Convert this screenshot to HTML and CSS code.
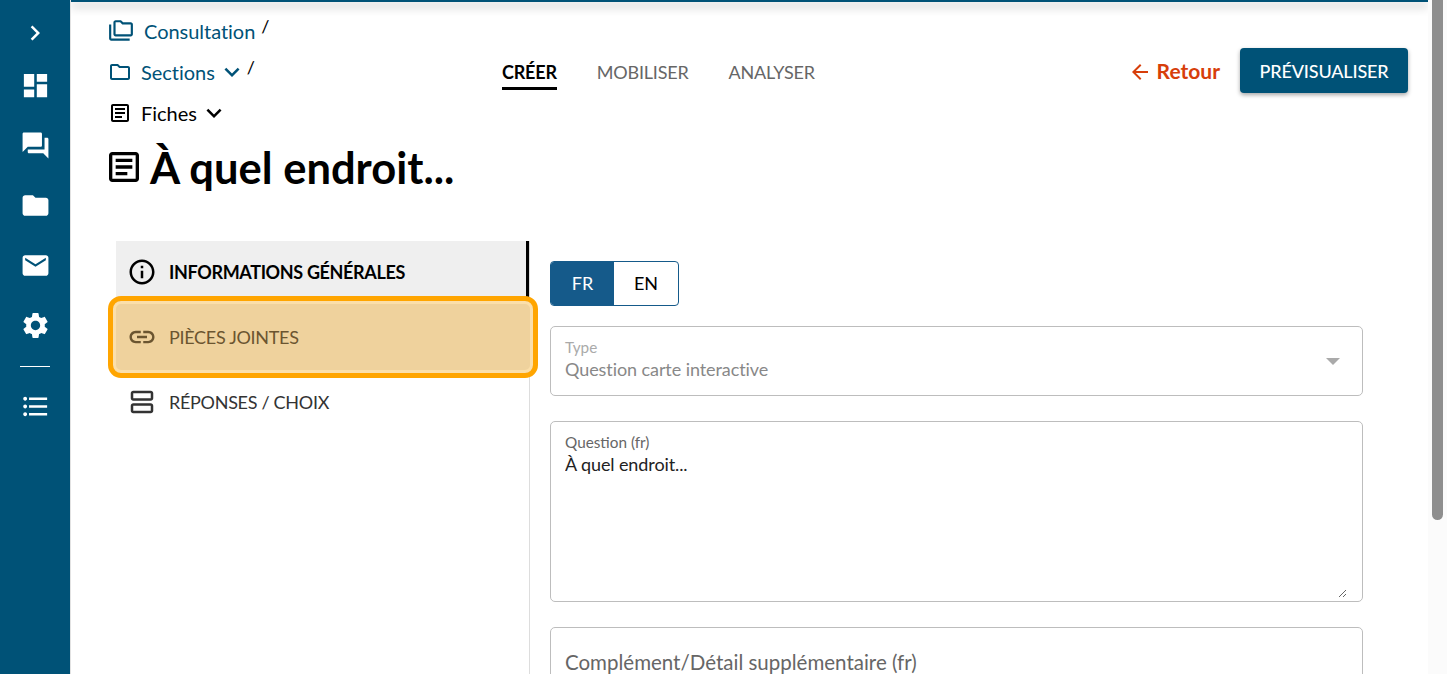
FILE: index.html
```html
<!DOCTYPE html>
<html lang="fr">
<head>
<meta charset="utf-8">
<title>À quel endroit...</title>
<link rel="stylesheet" href="styles.css">
</head>
<body>
<div class="app">
  <aside class="rail">
    <svg class="rail-icon rail-chevron" viewBox="0 0 24 24"><path d="M10 6L8.59 7.41 13.17 12l-4.58 4.59L10 18l6-6z"/></svg>
    <svg class="rail-icon" viewBox="0 0 24 24"><path d="M3 13h8V3H3v10zm0 8h8v-6H3v6zm10 0h8V11h-8v10zm0-18v6h8V3h-8z"/></svg>
    <svg class="rail-icon" viewBox="0 0 24 24"><path d="M21 6h-2v9H6v2c0 .55.45 1 1 1h11l4 4V7c0-.55-.45-1-1-1zm-4 6V3c0-.55-.45-1-1-1H3c-.55 0-1 .45-1 1v14l4-4h10c.55 0 1-.45 1-1z"/></svg>
    <svg class="rail-icon" viewBox="0 0 24 24"><path d="M10 4H4c-1.1 0-1.99.9-1.99 2L2 18c0 1.1.9 2 2 2h16c1.1 0 2-.9 2-2V8c0-1.1-.9-2-2-2h-8l-2-2z"/></svg>
    <svg class="rail-icon" viewBox="0 0 24 24"><path d="M20 4H4c-1.1 0-1.99.9-1.99 2L2 18c0 1.1.9 2 2 2h16c1.1 0 2-.9 2-2V6c0-1.1-.9-2-2-2zm0 4l-8 5-8-5V6l8 5 8-5v2z"/></svg>
    <svg class="rail-icon" viewBox="0 0 24 24"><path d="M19.14 12.94c.04-.3.06-.61.06-.94 0-.32-.02-.64-.07-.94l2.03-1.58c.18-.14.23-.41.12-.61l-1.92-3.32c-.12-.22-.37-.29-.59-.22l-2.39.96c-.5-.38-1.03-.7-1.62-.94l-.36-2.54c-.04-.24-.24-.41-.48-.41h-3.84c-.24 0-.43.17-.47.41l-.36 2.54c-.59.24-1.13.57-1.62.94l-2.39-.96c-.22-.08-.47 0-.59.22L2.74 8.87c-.12.21-.08.47.12.61l2.03 1.58c-.05.3-.09.63-.09.94s.02.64.07.94l-2.03 1.58c-.18.14-.23.41-.12.61l1.92 3.32c.12.22.37.29.59.22l2.39-.96c.5.38 1.03.7 1.62.94l.36 2.54c.05.24.24.41.48.41h3.84c.24 0 .44-.17.47-.41l.36-2.54c.59-.24 1.13-.56 1.62-.94l2.39.96c.22.08.47 0 .59-.22l1.92-3.32c.12-.22.07-.47-.12-.61l-2.01-1.58zM12 15.6c-1.98 0-3.6-1.62-3.6-3.6s1.62-3.6 3.6-3.6 3.6 1.62 3.6 3.6-1.62 3.6-3.6 3.6z"/></svg>
    <div class="rail-rule"></div>
    <svg class="rail-icon" viewBox="0 0 24 24"><path d="M4 10.5c-.83 0-1.5.67-1.5 1.5s.67 1.5 1.5 1.5 1.5-.67 1.5-1.5-.67-1.5-1.5-1.5zm0-6c-.83 0-1.5.67-1.5 1.5S3.17 7.5 4 7.5 5.5 6.83 5.5 6 4.83 4.5 4 4.5zm0 12c-.83 0-1.5.68-1.5 1.5s.68 1.5 1.5 1.5 1.5-.68 1.5-1.5-.67-1.5-1.5-1.5zM7 19h14v-2H7v2zm0-6h14v-2H7v2zm0-8v2h14V5H7z"/></svg>
  </aside>

  <main class="main">
    <div class="topline"></div>
    <header class="header">
      <nav class="crumbs">
        <div class="crumb crumb-first">
          <svg class="crumb-icon crumb-icon-lg" viewBox="0 0 24 24"><path d="M3 19h17v2H3c-1.1 0-2-.9-2-2V6h2v13zM23 6v9c0 1.1-.9 2-2 2H7c-1.1 0-2-.9-2-2V4c0-1.1.9-2 2-2h5l2 2h7c1.1 0 2 .9 2 2zM7 15h14V6h-7.83l-2-2H7v11z"/></svg>
          <a class="crumb-text">Consultation</a><span class="slash">/</span>
        </div>
        <div class="crumb crumb-second">
          <svg class="crumb-icon" viewBox="0 0 24 24"><path d="M9.17 6l2 2H20v10H4V6h5.17M10 4H4c-1.1 0-1.99.9-1.99 2L2 18c0 1.1.9 2 2 2h16c1.1 0 2-.9 2-2V8c0-1.1-.9-2-2-2h-8l-2-2z"/></svg>
          <a class="crumb-text">Sections</a>
          <svg class="crumb-caret" viewBox="0 0 24 24"><path d="M16.59 8.59L12 13.17 7.41 8.59 6 10l6 6 6-6z"/></svg><span class="slash">/</span>
        </div>
        <div class="crumb crumb-third">
          <svg class="crumb-icon" viewBox="0 0 24 24"><path d="M19 5v14H5V5h14m0-2H5c-1.1 0-2 .9-2 2v14c0 1.1.9 2 2 2h14c1.1 0 2-.9 2-2V5c0-1.1-.9-2-2-2z"/><path d="M14 17H7v-2h7v2zm3-4H7v-2h10v2zm0-4H7V7h10v2z"/></svg>
          <a class="crumb-text">Fiches</a>
          <svg class="crumb-caret" viewBox="0 0 24 24"><path d="M16.59 8.59L12 13.17 7.41 8.59 6 10l6 6 6-6z"/></svg>
        </div>
      </nav>
      <div class="tabs">
        <span class="tab tab-active">CRÉER</span>
        <span class="tab">MOBILISER</span>
        <span class="tab">ANALYSER</span>
      </div>
      <div class="actions">
        <a class="back">
          <svg class="back-icon" viewBox="0 0 24 24"><path d="M20 11H7.83l5.59-5.59L12 4l-8 8 8 8 1.41-1.41L7.83 13H20v-2z"/></svg>
          Retour
        </a>
        <button class="preview">PRÉVISUALISER</button>
      </div>
    </header>

    <h1 class="title">
      <svg class="title-icon" viewBox="0 0 24 24"><path d="M19 5v14H5V5h14m0-2H5c-1.1 0-2 .9-2 2v14c0 1.1.9 2 2 2h14c1.1 0 2-.9 2-2V5c0-1.1-.9-2-2-2z"/><path d="M14 17H7v-2h7v2zm3-4H7v-2h10v2zm0-4H7V7h10v2z"/></svg>
      À quel endroit...
    </h1>

    <div class="body">
      <nav class="side">
        <a class="side-item side-active">
          <svg class="side-icon" viewBox="0 0 24 24"><path d="M11 7h2v2h-2zm0 4h2v6h-2zm1-9C6.48 2 2 6.48 2 12s4.48 10 10 10 10-4.48 10-10S17.52 2 12 2zm0 18c-4.41 0-8-3.59-8-8s3.59-8 8-8 8 3.59 8 8-3.59 8-8 8z"/></svg>
          <span class="side-label">INFORMATIONS GÉNÉRALES</span>
        </a>
        <a class="side-item side-focus">
          <svg class="side-icon" viewBox="0 0 24 24"><path d="M3.9 12c0-1.71 1.39-3.1 3.1-3.1h4V7H7c-2.76 0-5 2.24-5 5s2.24 5 5 5h4v-1.9H7c-1.71 0-3.1-1.39-3.1-3.1zM8 13h8v-2H8v2zm9-6h-4v1.9h4c1.71 0 3.1 1.39 3.1 3.1s-1.39 3.1-3.1 3.1h-4V17h4c2.76 0 5-2.24 5-5s-2.24-5-5-5z"/></svg>
          <span class="side-label">PIÈCES JOINTES</span>
        </a>
        <a class="side-item">
          <svg class="side-icon" viewBox="0 0 24 24"><path d="M19 13H5c-1.1 0-2 .9-2 2v4c0 1.1.9 2 2 2h14c1.1 0 2-.9 2-2v-4c0-1.1-.9-2-2-2zm0 6H5v-4h14v4zm0-16H5c-1.1 0-2 .9-2 2v4c0 1.1.9 2 2 2h14c1.1 0 2-.9 2-2V5c0-1.1-.9-2-2-2zm0 6H5V5h14v4z"/></svg>
          <span class="side-label">RÉPONSES / CHOIX</span>
        </a>
      </nav>

      <section class="form">
        <div class="lang">
          <span class="lang-btn lang-on">FR</span>
          <span class="lang-btn">EN</span>
        </div>
        <div class="field field-select">
          <div class="select-text">
            <span class="field-label field-label-off">Type</span>
            <span class="select-value">Question carte interactive</span>
          </div>
          <span class="select-arrow"></span>
        </div>
        <div class="field field-area">
          <label class="field-label" for="q">Question (fr)</label>
          <textarea id="q" class="area">À quel endroit...</textarea>
        </div>
        <div class="field field-extra">
          <span class="extra-text">Complément/Détail supplémentaire (fr)</span>
        </div>
      </section>
    </div>
  </main>

  <div class="scrollbar"><div class="thumb"></div></div>
</div>
</body>
</html>
```

FILE: styles.css
```css
* { box-sizing: border-box; }
html, body { margin: 0; height: 100%; overflow: hidden; background: #fff; }
body { font-family: "Lato", "Liberation Sans", sans-serif; color: #000; }

.app { display: flex; height: 674px; }

.rail {
  flex: 0 0 71px;
  background: #005277;
  border-right: 1px solid #e2e2e2;
  display: flex;
  flex-direction: column;
  align-items: center;
  padding-top: 18px;
  gap: 29px;
}
.rail-icon { width: 31px; height: 31px; fill: #fff; flex: none; }
.rail-chevron { width: 30px; height: 30px; margin-bottom: -7px; }
.rail-rule { width: 30px; height: 1px; background: #fff; margin: -4px 0 -5px; flex: none; }

.main { flex: 1; min-width: 0; display: flex; flex-direction: column; overflow: hidden; }
.topline {
  flex: none;
  position: relative;
  height: 2px;
  background: #005277;
  box-shadow: 0 4px 10px rgba(0, 0, 0, .45);
}

.header { flex: none; display: flex; align-items: flex-start; padding: 9px 20px 0 37px; }

.crumbs { flex: 0 0 394px; display: flex; flex-direction: column; }
.crumb { display: flex; align-items: center; height: 41px; font-size: 20px; color: #005277; }
.crumb-first { height: 40px; }
.crumb-third { color: #000; }
.crumb-icon { width: 24px; height: 24px; fill: currentColor; flex: none; }
.crumb-icon-lg { width: 26px; height: 26px; }
.crumb-text { margin-left: 9px; letter-spacing: -.03px; }
.crumb-first .crumb-text { margin-left: 10px; }
.crumb-caret { width: 30px; height: 30px; fill: currentColor; margin-left: 2px; flex: none; }
.slash { color: #000; font-size: 18px; align-self: flex-start; margin: 4px 0 0 6px; }
.crumb-second .slash { margin: 5px 0 0 0; }

.tabs { display: flex; gap: 40px; padding-top: 49px; font-size: 18px; letter-spacing: -.2px; flex: none; }
.tab { color: #666; padding-bottom: 3px; border-bottom: 3px solid transparent; line-height: 24px; }
.tab-active { color: #000; font-weight: 700; border-bottom-color: #000; }

.actions { margin-left: auto; display: flex; align-items: center; gap: 20px; padding-top: 37px; }
.back { display: flex; align-items: center; gap: 5px; color: #d73e0a; font-size: 21px; font-weight: 700; }
.back-icon { width: 24px; height: 24px; fill: currentColor; margin-top: 3px; }
.preview {
  width: 168px;
  height: 45px;
  border: 0;
  border-radius: 4px;
  background: #005277;
  color: #fff;
  font: 500 18px "Lato", sans-serif;
  letter-spacing: -.15px;
  box-shadow: 0 2px 4px rgba(0, 0, 0, .35);
}

.title {
  flex: none;
  display: flex;
  align-items: center;
  gap: 6px;
  margin: 7px 0 0 37px;
  height: 54px;
  font-size: 43.5px;
  font-weight: 700;
  color: #000;
}
.title-icon { width: 40px; height: 40px; margin-left: -4px; fill: currentColor; flex: none; }

.body { flex: 1; display: flex; margin-top: 47px; padding-left: 45px; min-height: 0; }

.side { flex: 0 0 414px; border-right: 1px solid #ddd; display: flex; flex-direction: column; }
.side-item {
  position: relative;
  display: flex;
  align-items: center;
  flex: none;
  height: 65px;
  padding-left: 11px;
  gap: 12px;
  font-size: 18px;
  color: #333;
  letter-spacing: -.3px;
}
.side-icon { width: 30px; height: 30px; fill: currentColor; flex: none; position: relative; z-index: 1; }
.side-label { position: relative; z-index: 1; }
.side-active {
  height: 63px;
  padding-bottom: 1px;
  background: #efefef;
  color: #000;
  font-weight: 700;
  letter-spacing: -.35px;
  border-right: 3px solid #000;
}
.side-focus { color: #6b5530; }
.side-focus::after {
  content: "";
  position: absolute;
  inset: -8px -9px -9px -8px;
  background: #efd29d;
  border: 5px solid #ffa500;
  border-radius: 13px;
  box-shadow: inset 0 0 0 3px #fbdfaa;
}

.form { flex: 0 0 813px; margin-left: 20px; padding-top: 20px; display: flex; flex-direction: column; gap: 20px; }

.lang { display: flex; width: 129px; height: 45px; border: 1px solid #155a8a; border-radius: 4px; overflow: hidden; flex: none; }
.lang-btn { flex: 1; display: flex; align-items: center; justify-content: center; font-size: 18px; color: #000; padding-bottom: 2px; }
.lang-on { flex: 0 0 63px; background: #155a8a; color: #fff; }

.field { border: 1px solid #bdbdbd; border-radius: 5px; padding: 0 14px; flex: none; }
.field-label { display: block; font-size: 15.3px; color: #666; line-height: 18px; }
.field-label-off { color: #aaa; margin-top: -1px; margin-bottom: 1px; }

.field-select { height: 70px; display: flex; align-items: center; justify-content: space-between; }
.select-text { display: flex; flex-direction: column; margin-top: -3px; }
.select-value { font-size: 18px; color: #888; line-height: 24px; letter-spacing: -.08px; }
.select-arrow { width: 0; height: 0; border: 7px solid transparent; border-top-color: #aaa; border-bottom: 0; margin-right: 8px; }

.field-area { height: 181px; margin-top: 5px; display: flex; flex-direction: column; padding: 11px 15px 3px 14px; }
.area {
  flex: 1;
  width: 100%;
  border: 0;
  padding: 0;
  outline: 0;
  resize: both;
  font: 18px/26px "Lato", sans-serif;
  letter-spacing: -.1px;
  color: #222;
  background: transparent;
}

.field-extra { height: 80px; margin-top: 5px; padding-top: 22px; }
.extra-text { font-size: 20.5px; color: #666; }

.scrollbar { flex: 0 0 19px; background: #fbfbfb; padding: 0 4px; }
.thumb { height: 520px; background: #8e8e8e; border-radius: 0 0 6px 6px; }
```
